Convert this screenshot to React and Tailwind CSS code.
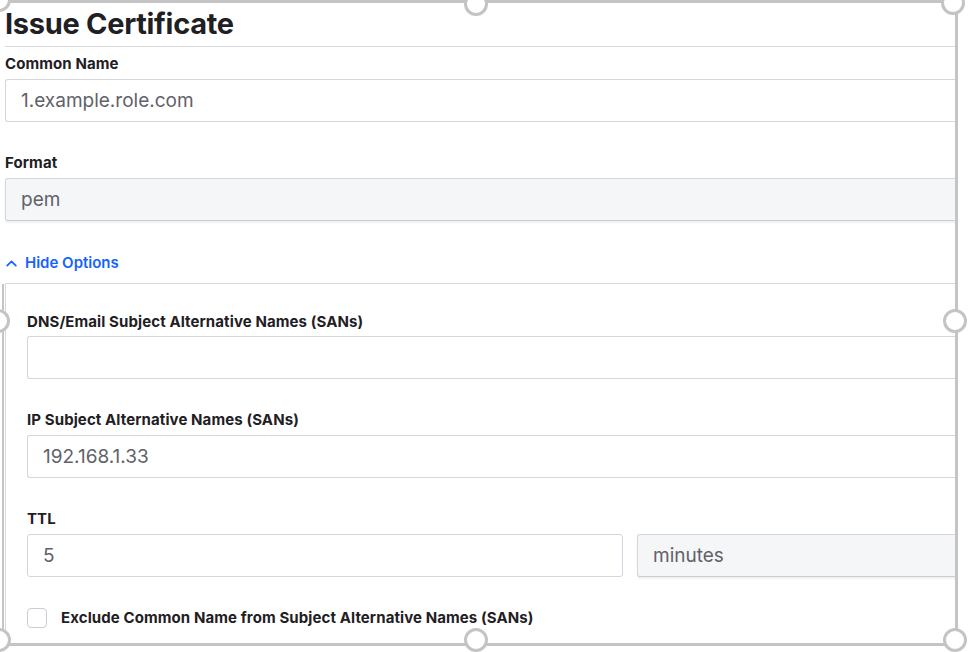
import React from "react";

const font = { fontFamily: "Inter, 'Noto Sans', sans-serif" };

const Label = ({ children, className = "" }) => (
  <div className={`h-5 pt-px text-[15px] leading-5 font-bold tracking-[0.1px] text-[#1f2023] ${className}`}>
    {children}
  </div>
);

const TextInput = ({ value, className = "" }) => (
  <div
    className={`h-[43px] flex items-center pl-[15px] pt-[2px] border border-r-0 border-[#d3d6de] rounded-l-[3px] bg-white text-[19px] text-[#5f6269] ${className}`}
  >
    {value}
  </div>
);

const SelectBox = ({ value, className = "" }) => (
  <div
    className={`h-[43px] flex items-center pl-[15px] pt-[2px] border border-r-0 border-[#d3d6de] border-b-[#c9ccd4] rounded-l-[3px] bg-[#f5f6f8] shadow-[0_2px_2px_rgba(0,0,0,0.06)] text-[19px] text-[#5f6269] ${className}`}
  >
    {value}
  </div>
);

const Handle = ({ className }) => (
  <div
    className={`absolute w-[24px] h-[24px] rounded-full border-[3px] border-[#c4c4c4] bg-white ${className}`}
  />
);

export default function App() {
  return (
    <div className="relative w-[968px] h-[652px] bg-white overflow-hidden" style={font}>
      <div className="w-[956px] h-[645px] overflow-hidden pl-[5px]">
        <div className="h-[47px] flex items-center border-b border-[#d7d9e1]">
          <h1 className="text-[29px] font-bold tracking-[-0.3px] text-[#1f2023] leading-none">
            Issue Certificate
          </h1>
        </div>

        <Label className="mt-[6px]">Common Name</Label>
        <TextInput value="1.example.role.com" className="mt-[6px]" />

        <Label className="mt-[30px]">Format</Label>
        <SelectBox value="pem" className="mt-[6px]" />

        <div className="mt-[32px] h-5 pt-px flex items-center gap-[7px] text-[15px] font-semibold text-[#1563ff]">
          <svg width="13" height="13" viewBox="0 0 24 24" fill="none" stroke="currentColor" strokeWidth="3.2" strokeLinecap="round" strokeLinejoin="round">
            <path d="M4 16 L12 8 L20 16" />
          </svg>
          Hide Options
        </div>

        <div className="mt-[10px] border border-r-0 border-[#d7d9e1] pl-[21px] pt-[27px] pb-8">
          <Label>DNS/Email Subject Alternative Names (SANs)</Label>
          <TextInput value="" className="mt-[5px]" />

          <Label className="mt-[30px]">IP Subject Alternative Names (SANs)</Label>
          <TextInput value="192.168.1.33" className="mt-[6px]" />

          <Label className="mt-[30px]">TTL</Label>
          <div className="mt-[6px] flex gap-[14px]">
            <div className="w-[596px] h-[43px] flex items-center pl-[15px] pt-[2px] border border-[#d3d6de] rounded-[3px] bg-white text-[19px] text-[#5f6269]">
              5
            </div>
            <SelectBox value="minutes" className="flex-1" />
          </div>

          <div className="mt-[30px] flex items-center gap-[14px]">
            <div className="w-[20px] h-[20px] rounded-[4px] border border-[#c9ccd4] bg-white" />
            <span className="text-[15px] font-bold tracking-[0.1px] text-[#1f2023]">
              Exclude Common Name from Subject Alternative Names (SANs)
            </span>
          </div>
        </div>
      </div>

      {/* crop frame overlay with handles */}
      <div className="absolute left-[-100px] top-[0px] w-[1058px] h-[646px] border-[3px] border-l-0 border-[#c4c4c4]" />
      <div className="absolute left-[2px] top-[284px] w-[2px] h-[352px] bg-[#c4c4c4]" />
      <Handle className="left-[-13px] top-[-12px]" />
      <Handle className="left-[464px] top-[-8px]" />
      <Handle className="left-[941px] top-[-9px]" />
      <Handle className="left-[-14px] top-[309px]" />
      <Handle className="left-[943px] top-[309px]" />
      <Handle className="left-[-13px] top-[628px]" />
      <Handle className="left-[464px] top-[628px]" />
      <Handle className="left-[943px] top-[628px]" />
    </div>
  );
}
